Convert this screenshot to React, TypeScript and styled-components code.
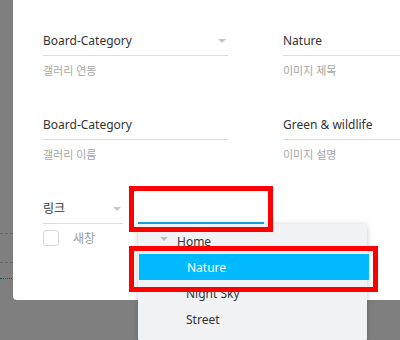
import React from "react";
import styled, { createGlobalStyle } from "styled-components";

const Global = createGlobalStyle`
  html, body { margin: 0; padding: 0; width: 400px; height: 340px; overflow: hidden; background: #fff; }
  body { font-family: "Noto Sans", "Noto Sans CJK KR", sans-serif; }
`;

const Page = styled.div`
  position: relative;
  width: 400px;
  height: 340px;
  overflow: hidden;
  background: #fff;
`;

const BgList = styled.div`
  display: flex;
  flex-direction: column;
  padding-top: 205px;
  width: 120px;
`;

const BgRow = styled.div`
  height: 28px;
  border-bottom: 1px dashed #d0d0d0;
`;

const BgTeal = styled.div`
  margin-top: 15px;
  border-top: 1px dotted #2a9fc0;
`;

const Overlay = styled.div`
  position: absolute;
  inset: 0;
  background: rgba(0, 0, 0, 0.5);
`;

const Modal = styled.div`
  position: absolute;
  left: 13px;
  top: -10px;
  width: 470px;
  height: 310px;
  box-sizing: border-box;
  background: #fff;
  border-radius: 4px;
  padding: 41px 0 0 30px;
  display: grid;
  grid-template-columns: 185px 185px;
  column-gap: 55px;
  row-gap: 36px;
  align-content: start;
`;

const Group = styled.div`
  display: flex;
  flex-direction: column;
`;

const Field = styled.div<{ $w?: number }>`
  display: flex;
  flex-shrink: 0;
  align-items: center;
  justify-content: space-between;
  height: 24px;
  width: ${(p) => (p.$w ? `${p.$w}px` : "auto")};
  border-bottom: 1px solid #dcdcdc;
  font-size: 12px;
  color: #333;
  line-height: 20px;
  padding-right: 2px;
`;

const FieldText = styled.span`
  padding-bottom: 4px;
`;

const Caret = styled.span<{ $c?: string }>`
  width: 0;
  height: 0;
  border-left: 4px solid transparent;
  border-right: 4px solid transparent;
  border-top: 4px solid ${(p) => p.$c || "#c6c6c6"};
  margin-bottom: 4px;
`;

const Helper = styled.div`
  margin-top: 7px;
  font-size: 11px;
  line-height: 16px;
  color: #a6a6a6;
`;

const LinkRow = styled.div`
  display: flex;
  align-items: flex-end;
  gap: 15px;
`;

const InputWrap = styled.div`
  position: relative;
  flex-shrink: 0;
  width: 126px;
  height: 23px;
  border-bottom: 2px solid #1aa7e8;
`;

const Dropdown = styled.div`
  position: absolute;
  left: 0;
  top: calc(100% + 2px);
  width: 229px;
  padding: 4px 0 10px;
  background: #f1f2f4;
  border-radius: 4px;
  box-shadow: 0 1px 6px rgba(0, 0, 0, 0.22);
  display: flex;
  flex-direction: column;
  z-index: 2;
`;

const Item = styled.div<{ $active?: boolean; $indent?: number }>`
  display: flex;
  align-items: center;
  gap: 9px;
  height: 26px;
  padding-left: ${(p) => p.$indent ?? 48}px;
  font-size: 12px;
  color: ${(p) => (p.$active ? "#fff" : "#333")};
  background: ${(p) => (p.$active ? "#00b9ff" : "transparent")};
  margin: ${(p) => (p.$active ? "0 -2px 0 1px" : "0")};
`;

const CheckRow = styled.label`
  display: flex;
  align-items: center;
  gap: 14px;
  margin-top: 5px;
  font-size: 12px;
  color: #9a9a9a;
`;

const Box = styled.span`
  width: 14px;
  height: 14px;
  border: 1px solid #d6d6d6;
  border-radius: 3px;
  background: #fff;
`;

const Annot = styled.div<{ $l: number; $t: number; $w: number; $h: number }>`
  position: absolute;
  left: ${(p) => p.$l}px;
  top: ${(p) => p.$t}px;
  width: ${(p) => p.$w}px;
  height: ${(p) => p.$h}px;
  box-sizing: border-box;
  border: 5px solid #ff0000;
  z-index: 5;
`;

export default function App() {
  return (
    <Page>
      <Global />
      <BgList>
        <BgRow />
        <BgRow />
        <BgTeal />
      </BgList>
      <Overlay />
      <Modal>
        <Group>
          <Field>
            <FieldText>Board-Category</FieldText>
            <Caret />
          </Field>
          <Helper>갤러리 연동</Helper>
        </Group>
        <Group>
          <Field>
            <FieldText>Nature</FieldText>
          </Field>
          <Helper>이미지 제목</Helper>
        </Group>
        <Group>
          <Field>
            <FieldText>Board-Category</FieldText>
          </Field>
          <Helper>갤러리 이름</Helper>
        </Group>
        <Group>
          <Field>
            <FieldText>Green &amp; wildlife</FieldText>
          </Field>
          <Helper>이미지 설명</Helper>
        </Group>
        <Group>
          <LinkRow>
            <Field $w={78}>
              <FieldText>링크</FieldText>
              <Caret />
            </Field>
            <InputWrap>
              <Dropdown>
                <Item $indent={22}>
                  <Caret $c="#bdbdbd" />
                  Home
                </Item>
                <Item $active>Nature</Item>
                <Item>Night Sky</Item>
                <Item>Street</Item>
              </Dropdown>
            </InputWrap>
          </LinkRow>
          <CheckRow>
            <Box />
            새창
          </CheckRow>
        </Group>
      </Modal>
      <Annot $l={129} $t={186} $w={144} $h={46} />
      <Annot $l={129} $t={246} $w={249} $h={46} />
    </Page>
  );
}
